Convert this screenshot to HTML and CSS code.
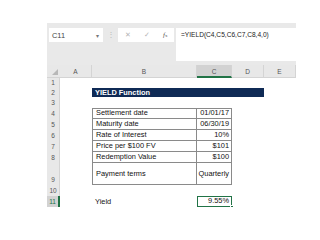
FILE: index.html
```html
<!DOCTYPE html>
<html lang="en">
  <head>
    <meta charset="UTF-8" />
    <title>YIELD Function</title>
    <link rel="stylesheet" href="styles.css">
  </head>
  <body>
    <div class="sheet">
      <div class="formula-bar">
        <div class="name-box">
          <span>C11</span>
          <span class="drop">▾</span>
        </div>
        <div class="dots">⋮</div>
        <div class="fx-box">
          <span>✕</span>
          <span>✓</span>
          <span class="fx"><i>f</i><small>x</small></span>
        </div>
        <div class="formula">=YIELD(C4,C5,C6,C7,C8,4,0)</div>
      </div>

      <div class="grid">
        <!-- header -->
        <div class="hdr corner"><span class="tri"></span></div>
        <div class="hdr col">A</div>
        <div class="hdr col">B</div>
        <div class="hdr col active-col">C</div>
        <div class="hdr col">D</div>
        <div class="hdr col">E</div>

        <div class="hdr row">1</div>
        <div></div><div></div><div></div><div></div><div></div>

        <div class="hdr row">2</div>
        <div></div>
        <div class="title">YIELD Function</div>
        <div></div>

        <div class="hdr row">3</div>
        <div></div><div></div><div></div><div></div><div></div>

        <div class="hdr row">4</div>
        <div></div>
        <div class="cell lbl first">Settlement date</div>
        <div class="cell val first">01/01/17</div>
        <div></div><div></div>

        <div class="hdr row">5</div>
        <div></div>
        <div class="cell lbl">Maturity date</div>
        <div class="cell val">06/30/19</div>
        <div></div><div></div>

        <div class="hdr row">6</div>
        <div></div>
        <div class="cell lbl">Rate of Interest</div>
        <div class="cell val">10%</div>
        <div></div><div></div>

        <div class="hdr row">7</div>
        <div></div>
        <div class="cell lbl">Price per $100 FV</div>
        <div class="cell val">$101</div>
        <div></div><div></div>

        <div class="hdr row">8</div>
        <div></div>
        <div class="cell lbl">Redemption Value</div>
        <div class="cell val">$100</div>
        <div></div><div></div>

        <div class="hdr row">9</div>
        <div></div>
        <div class="cell lbl mid">Payment terms</div>
        <div class="cell val mid">Quarterly</div>
        <div></div><div></div>

        <div class="hdr row">10</div>
        <div></div><div></div><div></div><div></div><div></div>

        <div class="hdr row active-row">11</div>
        <div></div>
        <div class="plain">Yield</div>
        <div class="selected">9.55%<span class="handle"></span></div>
        <div></div><div></div>
      </div>
    </div>
  </body>
</html>
```

FILE: styles.css
```css
body {
  margin: 0;
  background: #ffffff;
  font-family: "Liberation Sans", Arial, sans-serif;
  color: #111;
}

.sheet {
  width: 249px;
  margin: 23px 0 0 47px;
}

/* formula bar */
.formula-bar {
  display: flex;
  align-items: flex-start;
  height: 42px;
  padding: 5px 0 0 2px;
  box-sizing: border-box;
  background: #e9e9e9;
  font-size: 7px;
  color: #444;
}

.name-box {
  display: flex;
  justify-content: space-between;
  align-items: center;
  width: 54px;
  height: 14px;
  padding: 0 4px 0 3px;
  box-sizing: border-box;
  background: #fff;
  font-size: 7.4px;
}

.drop {
  font-size: 6px;
  color: #777;
}

.dots {
  width: 15px;
  height: 14px;
  line-height: 14px;
  text-align: center;
  color: #bbb;
  font-size: 8px;
}

.fx-box {
  display: flex;
  justify-content: space-around;
  align-items: center;
  width: 56px;
  height: 14px;
  background: #fff;
  color: #b5b5b5;
  font-size: 7px;
}

.fx {
  color: #555;
  font-family: "Liberation Serif", serif;
}

.fx small {
  font-size: 5px;
}

.formula {
  flex: 1;
  height: 33px;
  margin-left: 2px;
  padding: 3px 0 0 5px;
  box-sizing: border-box;
  background: #fff;
  font-size: 6.6px;
  color: #222;
}

/* grid */
.grid {
  display: grid;
  grid-template-columns: 13px 32px 105px 35px 32px 32px;
  grid-template-rows: 13px 10px 10px 10px 11px 11px 11px 11px 11px 22px 11px 11px;
  font-size: 7.4px;
  line-height: 10px;
}

.grid > div {
  box-sizing: border-box;
}

.hdr {
  background: #e8e8e8;
  color: #555;
  font-size: 6.5px;
  text-align: center;
}

.col {
  line-height: 13px;
  border-right: 1px solid #d4d4d4;
  border-bottom: 1px solid #d4d4d4;
}

.col:last-child {
  border-right: none;
}

.corner {
  position: relative;
  border-bottom: 1px solid #d4d4d4;
}

.tri {
  position: absolute;
  right: 2px;
  bottom: 2px;
  border-left: 6px solid transparent;
  border-bottom: 6px solid #b8b8b8;
}

.row {
  display: flex;
  align-items: flex-end;
  justify-content: center;
  border-right: 1px solid #d4d4d4;
}

.active-col {
  background: #d2d2d2;
  border-bottom: 2px solid #217346;
}

.active-row {
  background: #d2d2d2;
  border-right: 2px solid #217346;
  color: #217346;
}

.title {
  grid-column: span 3;
  background: #0f2a55;
  color: #fff;
  font-weight: bold;
  padding: 0 3px;
  line-height: 10px;
  margin-bottom: 1px;
}

.cell {
  border-bottom: 1px solid #8a8a8a;
  border-right: 1px solid #8a8a8a;
  display: flex;
  align-items: flex-end;
  padding: 0 2px 0 3px;
}

.cell.first {
  border-top: 1px solid #8a8a8a;
}

.lbl {
  border-left: 1px solid #8a8a8a;
}

.val {
  justify-content: flex-end;
}

.cell.mid {
  align-items: center;
}

.plain {
  display: flex;
  align-items: flex-end;
  padding: 0 3px;
}

.selected {
  position: relative;
  display: flex;
  align-items: flex-end;
  justify-content: flex-end;
  padding: 0 2px;
  border: 1.5px solid #217346;
}

.handle {
  position: absolute;
  right: -3px;
  bottom: -3px;
  width: 4px;
  height: 4px;
  background: #217346;
  border: 1px solid #fff;
  box-sizing: border-box;
}
```
